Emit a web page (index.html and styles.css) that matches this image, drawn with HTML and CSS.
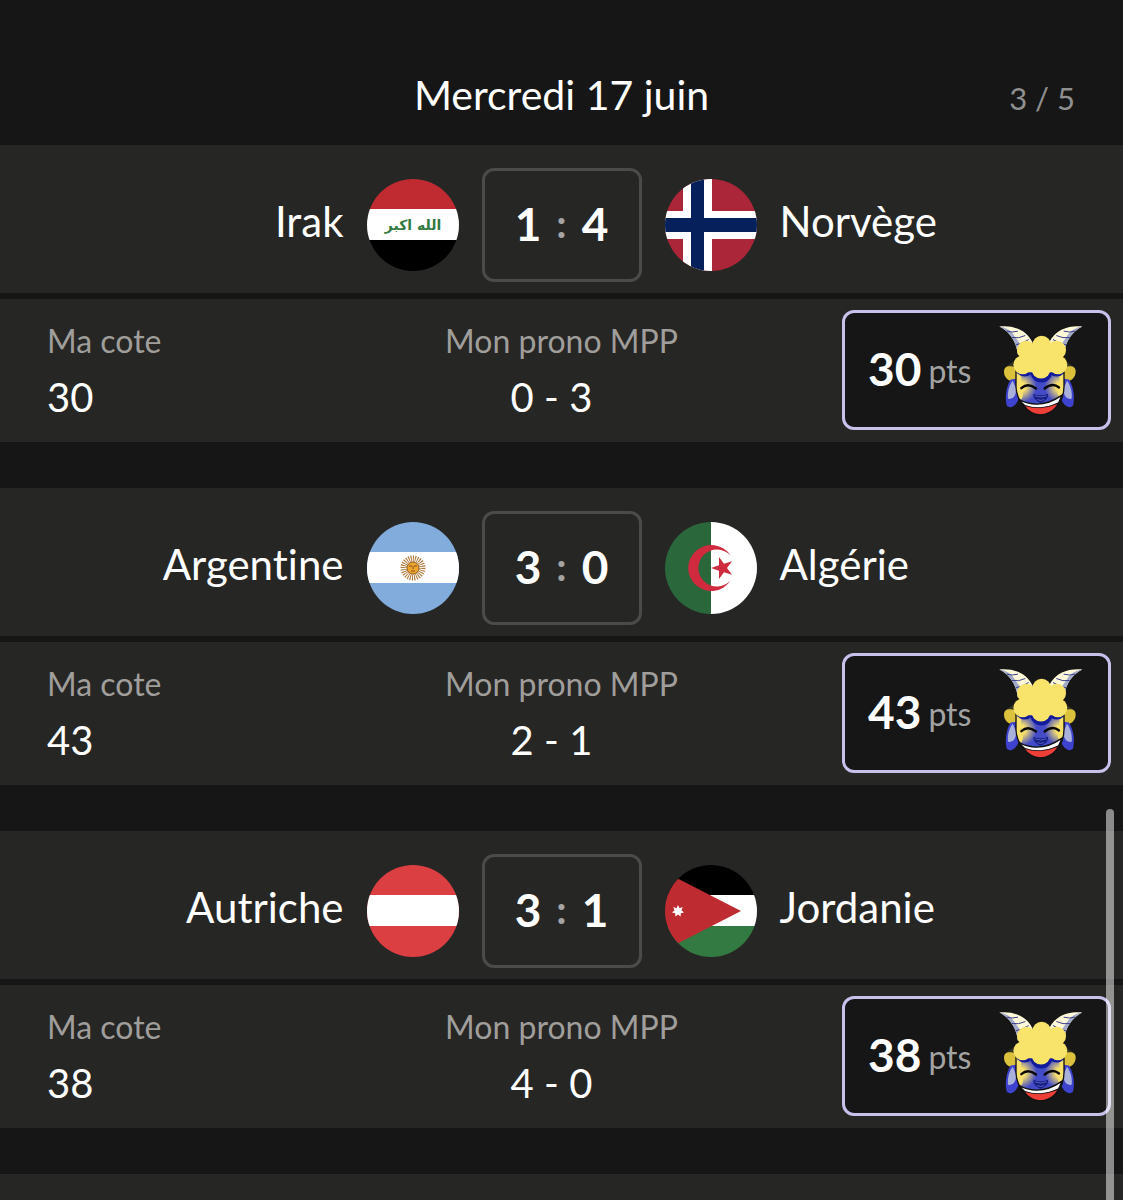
FILE: index.html
```html
<!DOCTYPE html>
<html lang="fr">
<head>
  <meta charset="utf-8">
  <meta name="viewport" content="width=device-width, initial-scale=1">
  <title>Mercredi 17 juin</title>
  <link rel="stylesheet" href="styles.css">
</head>
<body>
  <svg class="defs" width="0" height="0" aria-hidden="true">
    <defs>
      <radialGradient id="cheekL" gradientUnits="userSpaceOnUse" cx="92" cy="230" r="48">
        <stop offset="0.3" stop-color="#f7e06c"/>
        <stop offset="1" stop-color="#f7e06c" stop-opacity="0"/>
      </radialGradient>
      <radialGradient id="cheekR" gradientUnits="userSpaceOnUse" cx="212" cy="230" r="48">
        <stop offset="0.3" stop-color="#f7e06c"/>
        <stop offset="1" stop-color="#f7e06c" stop-opacity="0"/>
      </radialGradient>
      <clipPath id="face"><path d="M78 180H222V228C222 280 186 314 150 314C114 314 78 270 78 228Z"/></clipPath>
      <g id="horn">
        <path fill="#fdf9d8" d="M28 49C62 45 108 54 128 98L84 134C78 88 54 62 28 49Z"/>
        <path fill="#a3a9c9" d="M28 49C50 53 64 62 74 78L92 104L100 96L110 112L84 134C78 88 54 62 28 49Z"/>
        <path fill="none" stroke="#3c3f8e" stroke-width="3" d="M50 63Q66 68 84 63M66 82Q86 86 106 76M77 104Q94 102 116 88"/>
      </g>
      <g id="ear">
        <path fill="#333323" d="M48 170L78 148V184Z"/>
        <path fill="#dcc13c" d="M42 184C42 168 58 164 82 174V212C56 218 42 202 42 184Z"/>
        <path fill="#3d42cf" d="M62 208C48 230 44 262 50 286C60 298 78 288 86 266L78 206Z"/>
        <path fill="#a9b0dc" d="M68 212C56 228 52 248 54 266C68 268 80 256 78 234Z"/>
      </g>
      <symbol id="goat" viewBox="27 45 252 272">
        <use href="#horn"/>
        <use href="#horn" transform="matrix(-1 0 0 1 305 0)"/>
        <use href="#ear"/>
        <use href="#ear" transform="matrix(-1 0 0 1 299 0)"/>
        <g clip-path="url(#face)">
          <path fill="#434bc6" d="M70 170H230V320H70Z"/>
          <path fill="url(#cheekL)" d="M70 180H150V280H70Z"/>
          <path fill="url(#cheekR)" d="M152 180H232V280H152Z"/>
          <path fill="#f7e06c" d="M78 180H96Q92 200 94 222Q104 256 94 268L78 262ZM222 180H206Q210 200 208 222Q198 250 208 262L222 256Z"/>
          <g fill="#111b9b">
            <circle cx="154" cy="184" r="33"/>
            <circle cx="104" cy="170" r="29"/>
            <circle cx="200" cy="170" r="29"/>
          </g>
          <path fill="#fff" stroke="#111" stroke-width="4" d="M84 267Q150 302 216 255L206 278Q150 306 104 286Z"/>
          <path fill="#ed3f38" stroke="#111" stroke-width="2" d="M104 286Q150 302 204 280L180 318H124Z"/>
        </g>
        <path fill="none" stroke="#111" stroke-width="4" d="M78 180V228C78 270 114 314 150 314C186 314 222 280 222 228V180"/>
        <path fill="none" stroke="#080808" stroke-width="7" stroke-linecap="round" d="M94 234Q114 216 138 235M164 235Q188 216 207 232"/>
        <path fill="#171f85" d="M130 251Q152 260 174 251Q176 264 164 271Q152 284 140 271Q129 264 130 251Z"/>
        <path fill="none" stroke="#777ddd" stroke-width="2" d="M134 257Q152 264 170 257M142 268Q152 274 162 268"/>
        <g fill="#f9e46b">
          <circle cx="155" cy="105" r="28"/>
          <circle cx="109" cy="120" r="28"/>
          <circle cx="200" cy="120" r="28"/>
          <circle cx="98" cy="164" r="28"/>
          <circle cx="204" cy="164" r="28"/>
          <circle cx="153" cy="176" r="29"/>
          <path d="M98 110H206V186H98Z"/>
        </g>
      </symbol>
    </defs>
  </svg>

  <header class="day">
    <h1 class="day-title">Mercredi 17 juin</h1>
    <span class="day-count">3 / 5</span>
  </header>

  <main class="matches">
    <section class="match">
      <div class="match-head">
        <div class="team home">
          <span class="team-name">Irak</span>
          <svg class="flag" viewBox="0 0 92 92" role="img" aria-label="Drapeau de l'Irak">
            <path fill="#bf2b30" d="M0 0H92V31H0Z"/>
            <path fill="#fff" d="M0 30H92V61H0Z"/>
            <path d="M0 61H92V92H0Z"/>
            <text class="flag-script" x="46" y="51" text-anchor="middle">الله اكبر</text>
          </svg>
        </div>
        <div class="score"><span>1</span><span class="colon">:</span><span>4</span></div>
        <div class="team">
          <svg class="flag" viewBox="0 0 92 92" role="img" aria-label="Drapeau de la Norvège">
            <path fill="#ab2638" d="M0 0H92V92H0Z"/>
            <path fill="#fff" d="M18 0H47V92H18ZM0 32H92V60H0Z"/>
            <path fill="#06205b" d="M26 0H39V92H26ZM0 39H92V53H0Z"/>
          </svg>
          <span class="team-name">Norvège</span>
        </div>
      </div>
      <div class="match-info">
        <dl class="info">
          <dt>Ma cote</dt>
          <dd>30</dd>
        </dl>
        <dl class="info prono">
          <dt>Mon prono MPP</dt>
          <dd>0 - 3</dd>
        </dl>
        <div class="points">
          <strong>30</strong><span class="pts">pts</span>
          <svg class="goat" aria-hidden="true"><use href="#goat"/></svg>
        </div>
      </div>
    </section>

    <section class="match">
      <div class="match-head">
        <div class="team home">
          <span class="team-name">Argentine</span>
          <svg class="flag" viewBox="0 0 92 92" role="img" aria-label="Drapeau de l'Argentine">
            <path fill="#82acdc" d="M0 0H92V92H0Z"/>
            <path fill="#fff" d="M0 30H92V61H0Z"/>
            <circle class="sun-rays" cx="46" cy="46" r="9"/>
            <circle cx="46" cy="46" r="6" fill="#eda52e" stroke="#965f21"/>
            <path fill="none" stroke="#85511b" d="M42 44H45M47 44H50M44 49H48M46 44V47"/>
          </svg>
        </div>
        <div class="score"><span>3</span><span class="colon">:</span><span>0</span></div>
        <div class="team">
          <svg class="flag" viewBox="0 0 92 92" role="img" aria-label="Drapeau de l'Algérie">
            <path fill="#2a673b" d="M0 0H46V92H0Z"/>
            <path fill="#fff" d="M46 0H92V92H46Z"/>
            <path fill="#cf2a3d" d="M65.500 33.500A23 23 0 1 0 65.500 58.500A18.500 18.500 0 1 1 65.500 33.500Z"/>
            <path fill="#cf2a3d" d="M46 46L54 43.300V35L59 41.700L67 39.200L62 46L67 52.800L59 50.300L54 57V48.700Z"/>
          </svg>
          <span class="team-name">Algérie</span>
        </div>
      </div>
      <div class="match-info">
        <dl class="info">
          <dt>Ma cote</dt>
          <dd>43</dd>
        </dl>
        <dl class="info prono">
          <dt>Mon prono MPP</dt>
          <dd>2 - 1</dd>
        </dl>
        <div class="points">
          <strong>43</strong><span class="pts">pts</span>
          <svg class="goat" aria-hidden="true"><use href="#goat"/></svg>
        </div>
      </div>
    </section>

    <section class="match">
      <div class="match-head">
        <div class="team home">
          <span class="team-name">Autriche</span>
          <svg class="flag" viewBox="0 0 92 92" role="img" aria-label="Drapeau de l'Autriche">
            <path fill="#db3f42" d="M0 0H92V92H0Z"/>
            <path fill="#fff" d="M0 30H92V61H0Z"/>
          </svg>
        </div>
        <div class="score"><span>3</span><span class="colon">:</span><span>1</span></div>
        <div class="team">
          <svg class="flag" viewBox="0 0 92 92" role="img" aria-label="Drapeau de la Jordanie">
            <path d="M0 0H92V30H0Z"/>
            <path fill="#fff" d="M20 30H92V61H20Z"/>
            <path fill="#337a42" d="M0 61H92V92H0Z"/>
            <path fill="#be2b30" d="M0 7L76 46L0 85Z"/>
            <path fill="#fff" d="M13 40L14.500 43.200L17.700 42L16.500 45.200L19 47.400L15.800 48.200L15.600 51.600L13 49.400L10.400 51.600L10.200 48.200L7 47.400L9.500 45.200L8.300 42L11.500 43.200Z"/>
          </svg>
          <span class="team-name">Jordanie</span>
        </div>
      </div>
      <div class="match-info">
        <dl class="info">
          <dt>Ma cote</dt>
          <dd>38</dd>
        </dl>
        <dl class="info prono">
          <dt>Mon prono MPP</dt>
          <dd>4 - 0</dd>
        </dl>
        <div class="points">
          <strong>38</strong><span class="pts">pts</span>
          <svg class="goat" aria-hidden="true"><use href="#goat"/></svg>
        </div>
      </div>
    </section>

    <section class="match next"></section>
  </main>
  <div class="scrollbar"></div>
</body>
</html>
```

FILE: styles.css
```css
* {
  box-sizing: border-box;
}
body {
  position: relative;
  display: flex;
  flex-direction: column;
  min-height: 100vh;
  margin: 0;
  background: #161616;
  color: #fff;
  font-family: Lato, "Open Sans", sans-serif;
  font-size: 40px;
  font-variant-ligatures: none;
}
.defs {
  position: absolute;
}

.day {
  display: grid;
  grid-template-columns: 1fr auto 1fr;
  align-items: baseline;
  min-height: 145px;
  padding: 71px 48px 0;
  line-height: 48px;
}
.day-title {
  grid-column: 2;
  margin: 0;
  font-size: 41px;
  font-weight: 400;
}
.day-count {
  justify-self: end;
  color: #8f8f8f;
  font-size: 31px;
}

.matches {
  display: flex;
  flex: 1;
  flex-direction: column;
  gap: 46px;
}
.match {
  display: flex;
  flex-direction: column;
  gap: 6px;
}
.match-head {
  display: grid;
  grid-template-columns: 1fr 160px 1fr;
  align-items: center;
  gap: 23px;
  padding: 23px 0 11px;
  background: #262625;
}
.team {
  display: flex;
  align-items: center;
  gap: 23px;
}
.home {
  justify-content: flex-end;
}
.team-name {
  padding-bottom: 8px;
  font-size: 42px;
  line-height: 48px;
}
.flag {
  width: 92px;
  height: 92px;
  border-radius: 50%;
}
.flag-script {
  fill: #337a42;
  font-family: "DejaVu Sans", sans-serif;
  font-size: 14px;
  font-weight: 700;
}
.sun-rays {
  fill: none;
  stroke: #b07a3d;
  stroke-width: 7;
  stroke-dasharray: 1 1;
}
.score {
  display: grid;
  grid-template-columns: 1fr 12px 1fr;
  align-items: center;
  gap: 12px;
  height: 114px;
  padding: 0 28px 4px;
  border: 3px solid #4c4b49;
  border-radius: 12px;
  font-size: 46px;
  font-weight: 700;
  text-align: center;
}
.colon {
  color: #a3a3a3;
  font-size: 40px;
}

.match-info {
  display: grid;
  grid-template-columns: 1fr auto 1fr;
  align-items: center;
  padding: 11px 12px 12px;
  background: #262625;
}
.info {
  margin: 0;
  padding: 6px 0 0 35px;
}
.info dt {
  color: #a09e9b;
  font-size: 32px;
  line-height: 40px;
}
.info dd {
  margin: 8px 0 0;
  line-height: 56px;
}
.prono {
  padding-left: 0;
  text-align: center;
}
.prono dd {
  padding-right: 20px;
}
.points {
  display: flex;
  align-items: center;
  justify-self: end;
  width: 269px;
  height: 120px;
  padding: 0 25px 0 23px;
  border: 3px solid #c9c0ec;
  border-radius: 12px;
  background: #161616;
}
.points strong {
  padding-bottom: 4px;
  font-size: 46px;
  font-weight: 700;
}
.pts {
  margin-left: 7px;
  color: #a3a3a3;
  font-size: 32px;
}
.goat {
  width: 84px;
  height: 91px;
  margin-left: auto;
}
.next {
  flex: 1;
  background: #262625;
}

/* scroll thumb floats over the list */
.scrollbar {
  position: absolute;
  top: 809px;
  right: 9px;
  bottom: 0;
  width: 8px;
  border-radius: 4px 4px 0 0;
  background: rgba(255, 255, 255, 0.5);
}
```
